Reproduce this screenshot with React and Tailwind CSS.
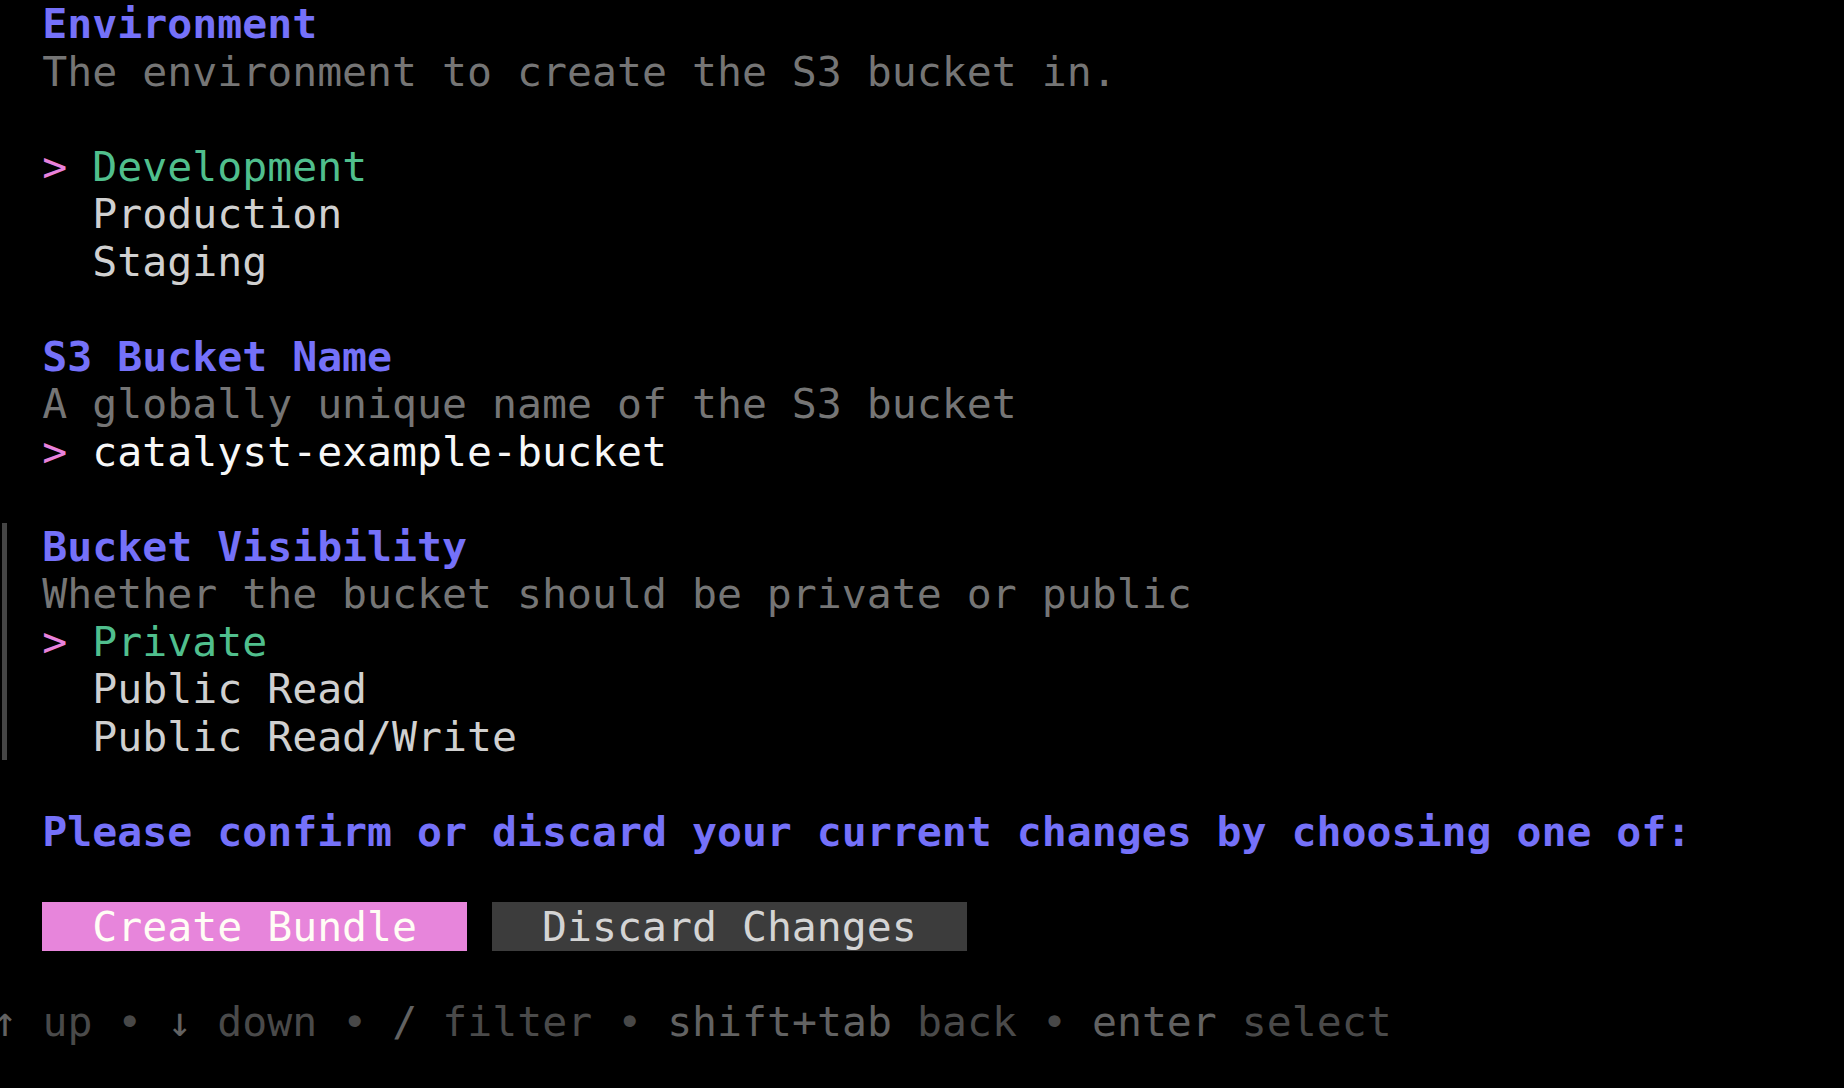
import React from "react";

function Row({ bar = false, children, className = "" }) {
  return (
    <div className="flex h-[47.5px]">
      <div className="w-[42.3px] shrink-0 flex">
        {bar && <div className="ml-[2.4px] w-[5px] bg-[#454545]" />}
      </div>
      <div className={"whitespace-pre " + className}>{children}</div>
    </div>
  );
}

const Blank = () => <div className="h-[47.5px]" />;

export default function App() {
  return (
    <div className="min-h-screen w-full bg-black overflow-hidden font-['DejaVu_Sans_Mono','Liberation_Mono',monospace] text-[41.5px] leading-[47.5px]">
      <Row className="font-bold text-[#7571F9]">Environment</Row>
      <Row className="text-[#757575]">The environment to create the S3 bucket in.</Row>
      <Blank />
      <Row>
        <span className="text-[#E882DC]">&gt; </span>
        <span className="text-[#50BF8D]">Development</span>
      </Row>
      <Row className="text-[#D0D0D0]">{"  Production"}</Row>
      <Row className="text-[#D0D0D0]">{"  Staging"}</Row>
      <Blank />
      <Row className="font-bold text-[#7571F9]">S3 Bucket Name</Row>
      <Row className="text-[#757575]">A globally unique name of the S3 bucket</Row>
      <Row>
        <span className="text-[#E882DC]">&gt; </span>
        <span className="text-[#F7F7F7]">catalyst-example-bucket</span>
      </Row>
      <Blank />
      <div className="flex">
        <div className="w-[42.3px] shrink-0 flex">
          <div className="ml-[2.4px] w-[5px] bg-[#454545]" />
        </div>
        <div className="flex flex-col whitespace-pre">
          <div className="h-[47.5px] font-bold text-[#7571F9]">Bucket Visibility</div>
          <div className="h-[47.5px] text-[#757575]">Whether the bucket should be private or public</div>
          <div className="h-[47.5px]">
            <span className="text-[#E882DC]">&gt; </span>
            <span className="text-[#50BF8D]">Private</span>
          </div>
          <div className="h-[47.5px] text-[#D0D0D0]">{"  Public Read"}</div>
          <div className="h-[47.5px] text-[#D0D0D0]">{"  Public Read/Write"}</div>
        </div>
      </div>
      <Blank />
      <Row className="font-bold text-[#7571F9]">Please confirm or discard your current changes by choosing one of:</Row>
      <Blank />
      <Row>
        <span className="bg-[#E785DB] text-[#FFFDF5]">{"  Create Bundle  "}</span>
        <span> </span>
        <span className="bg-[#3C3C3C] text-[#D4D4D4]">{"  Discard Changes  "}</span>
      </Row>
      <Blank />
      <div className="h-[47.5px] ml-[-7.6px] whitespace-pre">
        <span className="text-[#626262]">↑</span>
        <span className="text-[#4A4A4A]"> up</span>
        <span className="text-[#484848]"> • </span>
        <span className="text-[#626262]">↓</span>
        <span className="text-[#4A4A4A]"> down</span>
        <span className="text-[#484848]"> • </span>
        <span className="text-[#626262]">/</span>
        <span className="text-[#4A4A4A]"> filter</span>
        <span className="text-[#484848]"> • </span>
        <span className="text-[#626262]">shift+tab</span>
        <span className="text-[#4A4A4A]"> back</span>
        <span className="text-[#484848]"> • </span>
        <span className="text-[#626262]">enter</span>
        <span className="text-[#4A4A4A]"> select</span>
      </div>
    </div>
  );
}
